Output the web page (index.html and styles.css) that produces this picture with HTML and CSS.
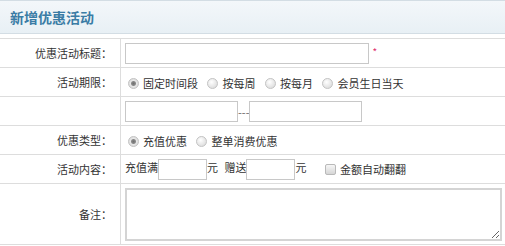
FILE: index.html
```html
<!DOCTYPE html>
<html lang="zh-CN">
<head>
  <meta charset="UTF-8" />
  <meta name="viewport" content="width=device-width, initial-scale=1.0"/>
  <title>新增优惠活动</title>
  <link rel="stylesheet" href="styles.css">
</head>
<body>

  <div class="header">
    <h1>新增优惠活动</h1>
  </div>

  <table class="form-table">
    <tr>
      <td class="label">优惠活动标题：</td>
      <td class="field">
        <input type="text" class="txt txt-long">
        <span class="required">*</span>
      </td>
    </tr>
    <tr>
      <td class="label">活动期限：</td>
      <td class="field">
        <label class="opt"><input type="radio" name="period" checked>固定时间段</label>
        <label class="opt"><input type="radio" name="period">按每周</label>
        <label class="opt"><input type="radio" name="period">按每月</label>
        <label class="opt"><input type="radio" name="period">会员生日当天</label>
      </td>
    </tr>
    <tr>
      <td class="label"></td>
      <td class="field">
        <input type="text" class="txt txt-date"><span class="dash">---</span><input type="text" class="txt txt-date">
      </td>
    </tr>
    <tr>
      <td class="label">优惠类型：</td>
      <td class="field">
        <label class="opt"><input type="radio" name="kind" checked>充值优惠</label>
        <label class="opt"><input type="radio" name="kind">整单消费优惠</label>
      </td>
    </tr>
    <tr>
      <td class="label">活动内容：</td>
      <td class="field">
        充值满<input type="text" class="txt txt-num">元
        <span class="gift">赠送</span><input type="text" class="txt txt-num">元
        <label class="opt check"><input type="checkbox">金额自动翻翻</label>
      </td>
    </tr>
    <tr class="memo-row">
      <td class="label">备注：</td>
      <td class="field">
        <textarea class="memo"></textarea>
      </td>
    </tr>
  </table>

</body>
</html>
```

FILE: styles.css
```css
body {
  margin: 0;
  background-color: #ffffff;
  color: #333333;
  font-family: "Noto Sans CJK SC", "Liberation Sans", sans-serif;
  font-size: 11px;
}

.header {
  height: 32px;
  border-top: 1px solid #d3dde4;
  border-bottom: 1px solid #d3dde4;
  background: linear-gradient(#f3f7fa, #e8f0f5);
  margin-bottom: 4px;
  display: flex;
  align-items: center;
  padding-left: 10px;
}

.header h1 {
  margin: 0;
  font-size: 14px;
  font-weight: bold;
  color: #3a7ca5;
}

.form-table {
  width: 100%;
  border-collapse: collapse;
}

.form-table td {
  border-top: 1px solid #dddddd;
  border-bottom: 1px solid #dddddd;
  height: 28px;
  padding: 0;
}

.form-table .label {
  width: 112px;
  padding-right: 8px;
  text-align: right;
  border-right: 1px solid #dddddd;
}

.form-table .field {
  padding-left: 4px;
  white-space: nowrap;
}

.txt {
  height: 19px;
  border: 1px solid #c8c8c8;
  padding: 0 2px;
  box-sizing: border-box;
  height: 21px;
  vertical-align: middle;
  font: inherit;
  margin: 0;
}

.txt-long {
  width: 244px;
}

.txt-date {
  width: 113px;
}

.txt-num {
  width: 49px;
}

.dash {
  color: #666;
  vertical-align: middle;
}

.required {
  color: #e0306a;
  font-size: 10px;
  margin-left: 1px;
}

.gift {
  margin-left: 4px;
}

.opt {
  display: inline-flex;
  align-items: center;
  margin-right: 4px;
  vertical-align: middle;
}

.opt input[type="radio"] {
  appearance: none;
  width: 11px;
  height: 11px;
  margin: 0 4px 0 3px;
  border-radius: 50%;
  border: 1px solid #c4c4c4;
  background: radial-gradient(circle at 40% 35%, #ffffff, #d4d4d4);
  box-sizing: border-box;
}

.opt input[type="radio"]:checked {
  background: radial-gradient(circle, #6f6f6f 0, #8a8a8a 2px, #e8e8e8 3px, #d0d0d0 100%);
}

.check {
  margin-left: 16px;
}

.opt input[type="checkbox"] {
  appearance: none;
  width: 11px;
  height: 11px;
  margin: 0 4px 0 0;
  border: 1px solid #b9b9b9;
  border-radius: 2px;
  background: linear-gradient(#f6f6f6, #d6d6d6);
  box-sizing: border-box;
}

.memo-row td {
  height: 60px;
}

.memo {
  display: block;
  width: 377px;
  height: 53px;
  border: 2px solid #d4d4d4;
  box-sizing: border-box;
  margin: 0;
  font: inherit;
}
```
